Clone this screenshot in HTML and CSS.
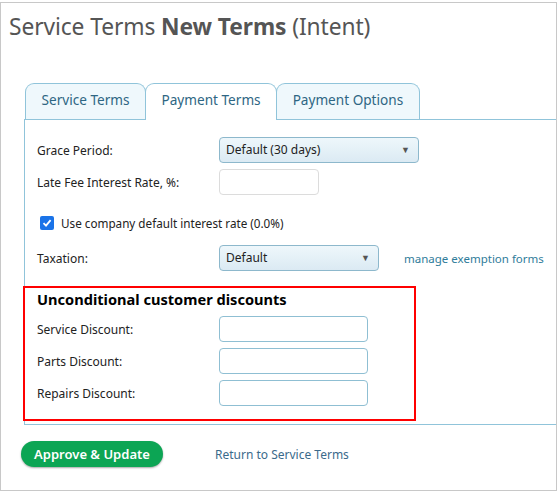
FILE: index.html
```html
<!DOCTYPE html>
<html>
<head>
<meta charset="utf-8">
<link rel="stylesheet" href="styles.css">
</head>
<body>
<div class="page">
  <h1 class="title">Service Terms <b>New Terms</b> (Intent)</h1>
  <div class="tabs">
    <div class="tab">Service Terms</div>
    <div class="tab active">Payment Terms</div>
    <div class="tab">Payment Options</div>
  </div>
  <div class="panel">
    <div class="row">
      <div class="label">Grace Period:</div>
      <div class="select wide"><span>Default (30 days)</span><span class="arrow">&#9660;</span></div>
    </div>
    <div class="row">
      <div class="label">Late Fee Interest Rate, %:</div>
      <div class="input small"></div>
    </div>
    <div class="check-row">
      <span class="checkbox"><svg width="10" height="10" viewBox="0 0 10 10"><path d="M1.5 5.2 L4 7.6 L8.6 2.2" fill="none" stroke="#fff" stroke-width="1.8"/></svg></span>
      <span>Use company default interest rate (0.0%)</span>
    </div>
    <div class="row">
      <div class="label">Taxation:</div>
      <div class="select mid"><span>Default</span><span class="arrow">&#9660;</span></div>
      <a class="manage">manage exemption forms</a>
    </div>
    <div class="discounts">
      <h2 class="disc-title">Unconditional customer discounts</h2>
      <div class="row">
        <div class="label">Service Discount:</div>
        <div class="input disc"></div>
      </div>
      <div class="row">
        <div class="label">Parts Discount:</div>
        <div class="input disc"></div>
      </div>
      <div class="row">
        <div class="label">Repairs Discount:</div>
        <div class="input disc"></div>
      </div>
    </div>
  </div>
  <div class="actions">
    <button class="approve">Approve &amp; Update</button>
    <a class="return">Return to Service Terms</a>
  </div>
</div>
</body>
</html>
```
FILE: styles.css
```css
* { box-sizing: border-box; }
body {
  margin: 0;
  font-family: "Noto Sans", "Open Sans", sans-serif;
  background: #fff;
  color: #222;
}
.page {
  margin-top: 2px;
  width: 557px;
  height: 489px;
  border: 1px solid #c8c8c8;
  overflow: hidden;
}
.title {
  margin: 0;
  padding: 9px 0 0 8px;
  font-size: 22.8px;
  line-height: 30px;
  font-weight: 400;
  color: #555;
  letter-spacing: -0.1px;
}
.title b { font-weight: 700; }
.tabs {
  display: flex;
  margin: 41px 0 0 24px;
  height: 36px;
}
.tab {
  height: 36px;
  padding: 0 15.5px;
  border: 1px solid #90c4da;
  border-bottom: none;
  border-radius: 9px 9px 0 0;
  background: #eff8fc;
  color: #2e6683;
  font-size: 13.6px;
  line-height: 32px;
  margin-right: -1px;
}
.tab.active {
  background: #fff;
  position: relative;
  z-index: 1;
  height: 37px;
}
.panel {
  margin-left: 23px;
  border-top: 1px solid #90c4da;
  border-left: 1px solid #90c4da;
  border-bottom: 1px solid #90c4da;
  padding: 17px 0 3px 0;
}
.row {
  display: flex;
  align-items: center;
  padding-left: 12px;
  margin-bottom: 6px;
}
.label {
  width: 182px;
  flex-shrink: 0;
  font-size: 12px;
  color: #222;
}
.select {
  flex-shrink: 0;
  height: 26px;
  border: 1px solid #8db8cc;
  border-radius: 4px;
  background: linear-gradient(#eef7fb, #dbeaf3);
  display: flex;
  align-items: center;
  justify-content: space-between;
  padding: 0 8px 1px 6px;
  font-size: 12px;
  color: #222;
}
.select.wide { width: 200px; }
.select.mid { width: 160px; }
.arrow { font-size: 9px; color: #555; }
.input {
  flex-shrink: 0;
  height: 26px;
  border: 1px solid #dcdcdc;
  border-radius: 4px;
  background: #fff;
}
.input.small { width: 100px; }
.input.disc { width: 149px; border-color: #8fbfd3; }
.check-row {
  display: flex;
  align-items: center;
  padding-left: 15px;
  margin: 19px 0 13px;
  font-size: 11.7px;
  line-height: 18px;
  color: #222;
}
.checkbox {
  width: 14px;
  height: 14px;
  background: #1a73e8;
  border-radius: 2px;
  display: flex;
  align-items: center;
  justify-content: center;
  margin-right: 7px;
}
.manage {
  margin-left: 25px;
  font-size: 11.5px;
  white-space: nowrap;
  color: #2f7c9a;
}
.discounts {
  margin: 15px 0 0 -2px;
  width: 393px;
  border: 2px solid #f00;
  padding: 0 0 7px 0;
}
.disc-title {
  margin: 0 0 6px 12px;
  font-size: 14.6px;
  line-height: 22px;
  font-weight: 700;
  color: #000;
}
.discounts .row { padding-left: 12px; }
.actions {
  display: flex;
  align-items: center;
  padding: 16px 0 0 20px;
}
.approve {
  width: 142px;
  height: 26px;
  border: none;
  border-radius: 13px;
  background: #0ca554;
  color: #fff;
  font-family: inherit;
  font-size: 13px;
  font-weight: 600;
  box-shadow: 0 1px 2px rgba(0,0,0,0.35);
  padding: 0;
}
.return {
  margin-left: 52px;
  font-size: 12px;
  color: #3b6a8b;
}
```
